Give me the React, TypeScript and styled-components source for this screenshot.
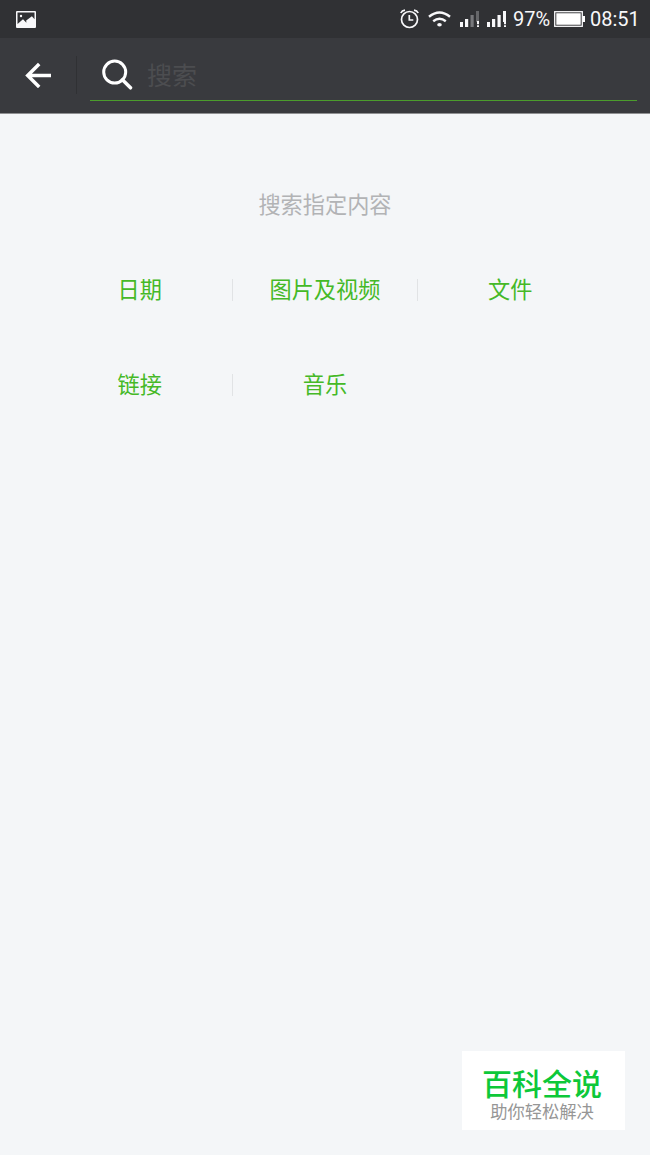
import React from "react";
import styled, { createGlobalStyle } from "styled-components";

const GlobalStyle = createGlobalStyle`
  * { box-sizing: border-box; }
  body { margin: 0; background: #f4f6f8; }
`;

const Screen = styled.div`
  position: relative;
  display: flex;
  flex-direction: column;
  min-height: 1155px;
  width: 650px;
  background: #f4f6f8;
  font-family: Roboto, "Noto Sans CJK SC", sans-serif;
`;

const StatusBar = styled.div`
  display: flex;
  justify-content: space-between;
  align-items: center;
  height: 38px;
  padding: 0 10px 0 16px;
  background: #303134;
  color: #f8f8fa;
  svg { display: block; flex: none; }
`;

const StatusGroup = styled.div`
  display: flex;
  align-items: center;
`;

const StatusText = styled.span<{ $width: number }>`
  width: ${(p) => p.$width}px;
  font-size: 20px;
  line-height: 38px;
  white-space: nowrap;
`;

const Gap = styled.span<{ $size: number }>`
  width: ${(p) => p.$size}px;
`;

const Header = styled.header`
  display: flex;
  height: 76px;
  padding-right: 13px;
  background: #393a3e;
  border-bottom: 1px solid #8f9092;
`;

const BackButton = styled.button`
  display: flex;
  align-items: center;
  width: 77px;
  height: 38px;
  margin: 18px 13px 0 0;
  padding: 0 0 0 25px;
  border: 0;
  border-right: 1px solid #303134;
  background: none;
`;

const SearchField = styled.div`
  display: flex;
  flex: 1;
  align-items: center;
  height: 63px;
  padding: 11px 0 0 12px;
  border-bottom: 1px solid #4b9c2c;
`;

const Placeholder = styled.span`
  margin-left: 14px;
  padding-top: 4px;
  color: #4c4d50;
  font-size: 25px;
  line-height: 36px;
`;

const Content = styled.main`
  padding: 75px 47px 0;
`;

const Title = styled.h1`
  margin: 0 0 52px;
  color: #b2b3b5;
  font-size: 22.2px;
  font-weight: 400;
  line-height: 33px;
  text-align: center;
`;

const Filters = styled.div`
  display: grid;
  grid-template-columns: repeat(3, 185.3px);
  row-gap: 62px;
`;

const Filter = styled.div<{ $divided?: boolean }>`
  position: relative;
  color: #45b927;
  font-size: 22.2px;
  line-height: 33px;
  text-align: center;
  &::after {
    content: "";
    display: ${(p) => (p.$divided ? "block" : "none")};
    position: absolute;
    top: 5px;
    right: -0.5px;
    width: 1px;
    height: 22px;
    background: #e1e3e5;
  }
`;

const Badge = styled.aside`
  position: absolute;
  right: 25px;
  bottom: 25px;
  width: 163px;
  height: 79px;
  padding: 10px 3px 0 0;
  background: #fff;
  text-align: center;
`;

const BadgeName = styled.div`
  color: #0dc839;
  font-size: 30px;
  font-weight: 500;
  font-family: "Noto Sans CJK SC", sans-serif;
  line-height: 42px;
`;

const BadgeNote = styled.div`
  color: #969696;
  font-size: 17.3px;
  line-height: 18px;
`;

const PictureIcon = () => (
  <svg width="20" height="17" viewBox="0 0 20 17">
    <path fill="#f8f8fa" fillRule="evenodd" d="M1 0h18q1 0 1 1v15q0 1-1 1H1q-1 0-1-1V1q0-1 1-1ZM1.5 1.5V13L7 8.3l3.4 3.4-.2-2.2 5.7-4.3 2.6 3V1.5Z" />
    <circle cx="5" cy="5" r="1.2" fill="#f8f8fa" />
  </svg>
);

const AlarmIcon = () => (
  <svg width="19" height="20" viewBox="0 0 19 20" fill="none" stroke="#f8f8fa" strokeWidth="1.7">
    <circle cx="9.5" cy="10.5" r="8" />
    <path d="M9.3 6v5h4M.8 4Q2 1.5 5 1.1M18.2 4Q17 1.5 14 1.1" />
  </svg>
);

const WifiIcon = () => (
  <svg width="23" height="16" viewBox="0 0 23 16" fill="none" stroke="#f8f8fa" strokeWidth="2.4">
    <path d="M1 5.7Q11.5-2.8 22 5.7M5.2 10.2q6.3-5 12.6 0" />
    <ellipse cx="11.5" cy="13.8" rx="2.3" ry="1.8" fill="#f8f8fa" stroke="none" />
  </svg>
);

const SignalIcon = ({ weak = false }: { weak?: boolean }) => (
  <svg width="20" height="16" viewBox="0 0 20 16" fill="#f8f8fa">
    <path d="M0 11h3v5H0zM5 8h3.2v8H5z" />
    <path d="M10.5 4h3.2v12h-3.2z" fill={weak ? "#77787b" : "#f8f8fa"} />
    <path d="M16 0h3v11h-3z" fill={weak ? "#66676a" : "#f8f8fa"} />
    <path d="M17 10h2v3.3h-2zM17 14.3h2V16h-2z" />
  </svg>
);

const BatteryIcon = () => (
  <svg width="31" height="16" viewBox="0 0 31 16">
    <rect x=".7" y=".7" width="27.6" height="14.6" fill="none" stroke="#f8f8fa" strokeWidth="1.3" />
    <path d="M2.3 2.3h24.4v11.4H2.3zM28.5 5H31v6h-2.5z" fill="#fff" />
  </svg>
);

const ArrowIcon = () => (
  <svg width="27" height="26" viewBox="0 0 27 26" fill="none" stroke="#fff" strokeWidth="3.5">
    <path d="M26 13.5H3M14.2 2 2.7 13.5 14.2 25" />
  </svg>
);

const SearchIcon = () => (
  <svg width="31" height="31" viewBox="0 0 31 31" fill="none" stroke="#fff" strokeWidth="3">
    <circle cx="12.7" cy="13.1" r="11" />
    <path d="m20.4 20.8 8.1 8" strokeWidth="3.5" strokeLinecap="round" />
  </svg>
);

const filters = [
  { label: "日期", divided: true },
  { label: "图片及视频", divided: true },
  { label: "文件" },
  { label: "链接", divided: true },
  { label: "音乐" },
];

export default function App() {
  return (
    <Screen>
      <GlobalStyle />
      <StatusBar>
        <PictureIcon />
        <StatusGroup>
          <AlarmIcon />
          <Gap $size={9} />
          <WifiIcon />
          <Gap $size={9} />
          <SignalIcon weak />
          <Gap $size={7} />
          <SignalIcon />
          <Gap $size={6} />
          <StatusText $width={41}>97%</StatusText>
          <BatteryIcon />
          <Gap $size={5} />
          <StatusText $width={50}>08:51</StatusText>
        </StatusGroup>
      </StatusBar>
      <Header>
        <BackButton aria-label="返回">
          <ArrowIcon />
        </BackButton>
        <SearchField>
          <SearchIcon />
          <Placeholder>搜索</Placeholder>
        </SearchField>
      </Header>
      <Content>
        <Title>搜索指定内容</Title>
        <Filters>
          {filters.map((f) => (
            <Filter key={f.label} $divided={f.divided}>{f.label}</Filter>
          ))}
        </Filters>
      </Content>
      <Badge>
        <BadgeName>百科全说</BadgeName>
        <BadgeNote>助你轻松解决</BadgeNote>
      </Badge>
    </Screen>
  );
}
